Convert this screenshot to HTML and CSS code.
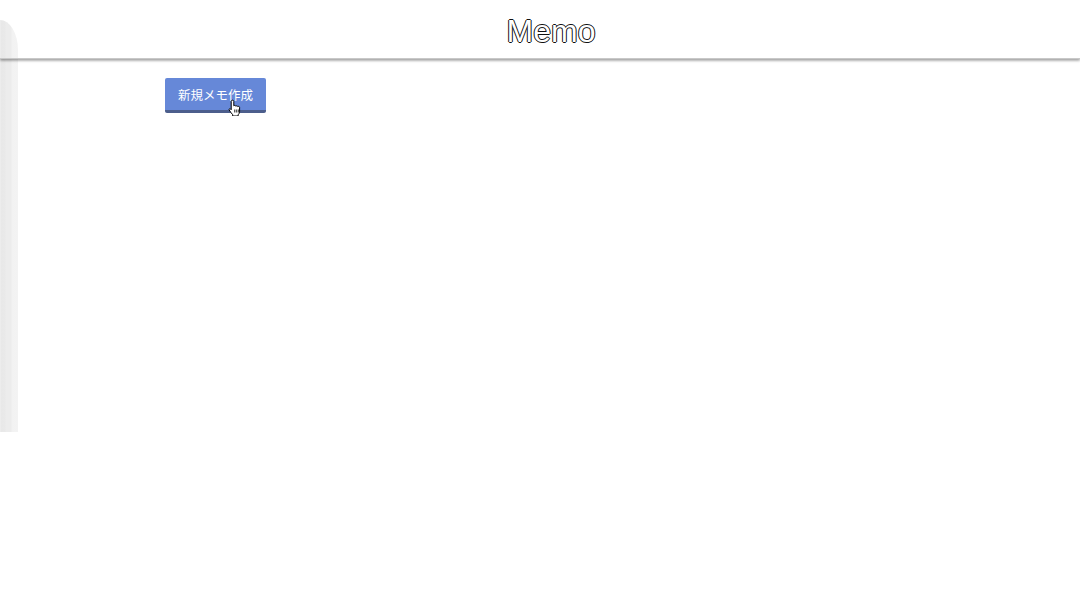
FILE: index.html
```html
<!DOCTYPE html>
<html lang="ja">
<head>
<meta charset="utf-8">
<title>Memo</title>
<link rel="stylesheet" href="styles.css">
</head>
<body>
<div class="page">
  <div class="sidebar"></div>
  <header class="header"><h1 class="title">Memo</h1></header>
  <main class="main">
    <button class="btn">新規メモ作成
      <svg class="cursor" width="14" height="17" viewBox="0 0 14 17">
        <path d="M4.5 1.2c.8 0 1.3.5 1.3 1.3v4.3c.3-.5 1.8-.5 2 .4.4-.6 1.8-.5 2 .4.5-.5 1.8-.3 1.8.8v3.8c0 1.6-.6 2.8-1.5 3.6v1.2H4.7v-1.3C3.6 14.6 2.4 12.9 1.2 11c-.5-.8.4-1.7 1.2-1.1l.8.8V2.5c0-.8.5-1.3 1.3-1.3z" fill="#fff" stroke="#000" stroke-width="1"/>
        <path d="M6.8 10.5v3M8.8 10.5v3M10.8 10.5v3" stroke="#000" stroke-width=".9"/>
      </svg>
    </button>
  </main>
</div>
</body>
</html>
```

FILE: styles.css
```css
html, body {
  margin: 0;
  padding: 0;
  background: #fff;
}
body {
  font-family: "Liberation Sans", Arial, "Noto Sans CJK JP", sans-serif;
}
.page {
  display: grid;
  grid-template-columns: 18px 1fr;
  grid-template-rows: 59px auto;
  width: 1080px;
}
.sidebar {
  grid-column: 1;
  grid-row: 1 / 3;
  margin-top: 20px;
  height: 412px;
  border-top-right-radius: 18px 30px;
  background: linear-gradient(to right, #f0f0f0 0, #e8e8e8 1px, #e9e9e9 5px, #ececec 6px, #ececec 11px, #f2f2f2 12px, #f3f3f3 18px);
}
.header {
  grid-column: 1 / 3;
  grid-row: 1;
  z-index: 1;
  display: flex;
  justify-content: center;
  align-items: center;
  box-shadow: 0 1px 3px rgba(0, 0, 0, 0.35), 0 2px 2px rgba(0,0,0,0.12);
  border-bottom: 1px solid #c8c8c8;
}
.title {
  margin: 4px 0 0 22px;
  font-weight: normal;
  font-size: 32px;
  color: #fff;
  line-height: 1;
  text-shadow: 1px 0 0 #111, -1px 0 0 #111, 0 1px 0 #111, 0 -1px 0 #111;
}
.main {
  grid-column: 2;
  grid-row: 2;
  padding: 19px 0 0 147px;
}
.btn {
  position: relative;
  display: block;
  width: 101px;
  height: 35px;
  padding: 3px 0 0;
  border: none;
  border-bottom: 3px solid #4c5e8c;
  border-radius: 2px;
  background: #6688d8;
  color: #fff;
  font-family: "Noto Sans CJK JP", sans-serif;
  font-size: 12.5px;
  line-height: 1;
  text-align: center;
}
.cursor {
  position: absolute;
  left: 63px;
  top: 21px;
}
```
